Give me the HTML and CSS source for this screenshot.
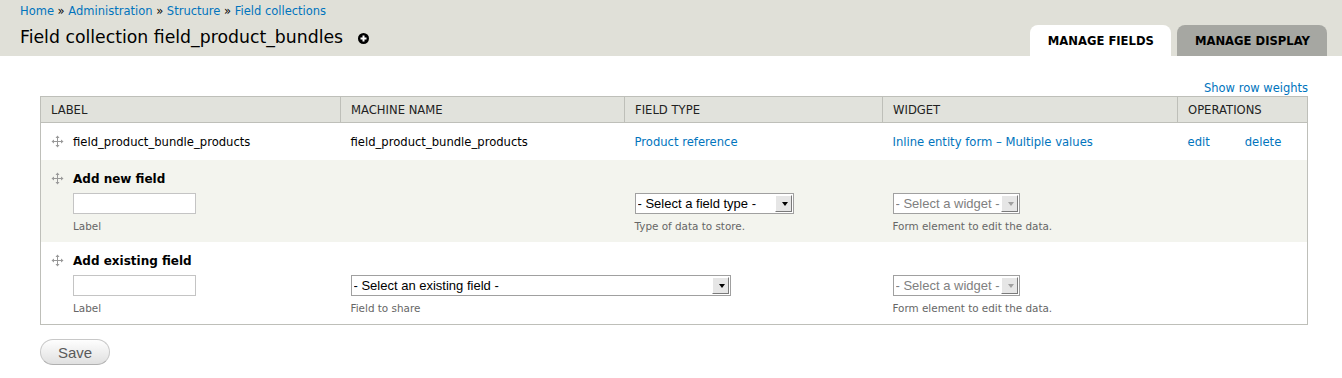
FILE: index.html
```html
<!DOCTYPE html>
<html lang="en">
<head>
    <meta charset="UTF-8">
    <title>Field collection field_product_bundles</title>
    <link rel="stylesheet" href="styles.css">
</head>
<body>
    <div class="branding">
        <div class="branding-main">
            <div class="breadcrumb">
                <a href="#">Home</a> » <a href="#">Administration</a> » <a href="#">Structure</a> » <a href="#">Field collections</a>
            </div>
            <h1 class="page-title">
                Field collection field_product_bundles
                <a href="#" class="shortcut" title="Add to shortcuts">
                    <svg width="11" height="11" viewBox="0 0 11 11"><circle cx="5.5" cy="5.5" r="5.5" fill="#000"/><path d="M4.5 2.5h2v2h2v2h-2v2h-2v-2h-2v-2h2z" fill="#fff"/></svg>
                </a>
            </h1>
        </div>
        <ul class="tabs">
            <li class="tab active"><a href="#">Manage fields</a></li>
            <li class="tab"><a href="#">Manage display</a></li>
        </ul>
    </div>

    <div class="page">
        <div class="row-weights"><a href="#">Show row weights</a></div>

        <form>
            <table class="field-overview">
                <colgroup>
                    <col style="width: 300px">
                    <col style="width: 284px">
                    <col style="width: 258px">
                    <col style="width: 295px">
                    <col>
                </colgroup>
                <thead>
                    <tr>
                        <th>Label</th>
                        <th>Machine name</th>
                        <th>Field type</th>
                        <th>Widget</th>
                        <th>Operations</th>
                    </tr>
                </thead>
                <tbody>
                    <tr class="field-row">
                        <td>
                            <span class="drag-handle"><svg width="13" height="13" viewBox="0 0 13 13"><path d="M6 3h1v3h3v1H7v3H6V7H3V6h3z" fill="#999"/><path d="M6.5 0.5L8.5 3h-4zM6.5 12.5L4.5 10h4zM0.5 6.5L3 4.5v4zM12.5 6.5L10 8.5v-4z" fill="#999"/></svg></span>field_product_bundle_products
                        </td>
                        <td>field_product_bundle_products</td>
                        <td><a href="#">Product reference</a></td>
                        <td><a href="#">Inline entity form – Multiple values</a></td>
                        <td class="ops"><a href="#">edit</a><a href="#">delete</a></td>
                    </tr>
                    <tr class="add-row even">
                        <td>
                            <div class="add-title">
                                <span class="drag-handle"><svg width="13" height="13" viewBox="0 0 13 13"><path d="M6 3h1v3h3v1H7v3H6V7H3V6h3z" fill="#999"/><path d="M6.5 0.5L8.5 3h-4zM6.5 12.5L4.5 10h4zM0.5 6.5L3 4.5v4zM12.5 6.5L10 8.5v-4z" fill="#999"/></svg></span>Add new field
                            </div>
                            <div class="add-body">
                                <input type="text" class="text-input">
                                <div class="description">Label</div>
                            </div>
                        </td>
                        <td></td>
                        <td>
                            <span class="select" style="width: 159px">
                                <select><option>- Select a field type -</option></select>
                            </span>
                            <div class="description">Type of data to store.</div>
                        </td>
                        <td>
                            <span class="select disabled" style="width: 127px">
                                <select disabled><option>- Select a widget -</option></select>
                            </span>
                            <div class="description">Form element to edit the data.</div>
                        </td>
                        <td></td>
                    </tr>
                    <tr class="add-row">
                        <td>
                            <div class="add-title">
                                <span class="drag-handle"><svg width="13" height="13" viewBox="0 0 13 13"><path d="M6 3h1v3h3v1H7v3H6V7H3V6h3z" fill="#999"/><path d="M6.5 0.5L8.5 3h-4zM6.5 12.5L4.5 10h4zM0.5 6.5L3 4.5v4zM12.5 6.5L10 8.5v-4z" fill="#999"/></svg></span>Add existing field
                            </div>
                            <div class="add-body">
                                <input type="text" class="text-input">
                                <div class="description">Label</div>
                            </div>
                        </td>
                        <td colspan="2">
                            <span class="select" style="width: 380px">
                                <select><option>- Select an existing field -</option></select>
                            </span>
                            <div class="description">Field to share</div>
                        </td>
                        <td>
                            <span class="select disabled" style="width: 127px">
                                <select disabled><option>- Select a widget -</option></select>
                            </span>
                            <div class="description">Form element to edit the data.</div>
                        </td>
                        <td></td>
                    </tr>
                </tbody>
            </table>

            <div class="form-actions">
                <button type="submit" class="button">Save</button>
            </div>
        </form>
    </div>
</body>
</html>
```

FILE: styles.css
```css
:root {
    --link: #0074bd;
    --header-bg: #e0e0d8;
    --border: #bebfb9;
    --th-bg: #e1e2dc;
    --even-bg: #f3f4ee;
    --desc: #666;
}

* {
    margin: 0;
    padding: 0;
    box-sizing: border-box;
}

body {
    font-family: "DejaVu Sans", Verdana, sans-serif;
    font-size: 11.6px;
    color: #000;
    background: #fff;
}

a {
    color: var(--link);
    text-decoration: none;
}

/* header */

.branding {
    background: var(--header-bg);
    height: 56px;
    padding: 0 15px 0 20px;
    display: flex;
    justify-content: space-between;
    align-items: flex-end;
}

.branding-main {
    align-self: flex-start;
    padding-top: 4px;
}

.breadcrumb {
    line-height: 14px;
    font-size: 11.5px;
}

.page-title {
    margin-top: 8px;
    font-size: 17.3px;
    font-weight: normal;
    line-height: 22px;
    display: flex;
    align-items: center;
}

.shortcut {
    display: inline-flex;
    margin-left: 15px;
    margin-top: 2px;
}

.tabs {
    list-style: none;
    display: flex;
    gap: 6px;
}

.tab a {
    display: block;
    height: 31px;
    line-height: 32px;
    padding: 0 17px 0 18px;
    border-radius: 8px 8px 0 0;
    background: #a6a7a2;
    color: #000;
    font-weight: bold;
    font-size: 11.6px;
    text-transform: uppercase;
}

.tab.active a {
    background: #fff;
}

/* content */

.page {
    padding: 25px 34px 20px 40px;
}

.row-weights {
    text-align: right;
    line-height: 14px;
    font-size: 11.5px;
    margin-bottom: 1px;
}

.field-overview {
    width: 100%;
    table-layout: fixed;
    border-collapse: collapse;
    border: 1px solid var(--border);
}

.field-overview th {
    background: var(--th-bg);
    border-right: 1px solid var(--border);
    border-bottom: 1px solid var(--border);
    padding: 5px 10px 3px;
    line-height: 17px;
    font-weight: normal;
    text-align: left;
    text-transform: uppercase;
    color: #222;
}

.field-overview td {
    padding: 11px 10px 9px;
    line-height: 17px;
    vertical-align: middle;
}

.field-row td {
    white-space: nowrap;
}

.drag-handle {
    display: inline-flex;
    width: 13px;
    height: 13px;
    margin-right: 9px;
    vertical-align: -2px;
}

.ops a {
    margin-right: 35px;
}

.add-row td {
    padding: 10px 10px 9px;
    vertical-align: bottom;
}

.add-row.even td {
    background: var(--even-bg);
}

.add-title {
    font-weight: bold;
    font-size: 12px;
    line-height: 18px;
    white-space: nowrap;
}

.add-body {
    margin-left: 22px;
    margin-top: 5px;
}

.text-input {
    display: block;
    width: 123px;
    height: 21px;
    border: 1px solid #c4c4c4;
    background: #fff;
}

.description {
    margin-top: 5px;
    font-size: 10.4px;
    line-height: 14px;
    color: var(--desc);
    white-space: nowrap;
}

/* windows-classic looking select */

.select {
    position: relative;
    display: block;
    height: 21px;
}

.select select {
    appearance: none;
    -webkit-appearance: none;
    width: 100%;
    height: 21px;
    border: 1px solid #a0a0a0;
    background: #fff;
    font-family: "Liberation Sans", Arial, sans-serif;
    font-size: 13px;
    color: #000;
    padding: 0 18px 0 2px;
}

.select.disabled select {
    color: #808080;
    opacity: 1;
}

.select::before {
    content: "";
    position: absolute;
    top: 2px;
    right: 2px;
    bottom: 2px;
    width: 15px;
    background: #e6e6e6;
    border: 1px solid;
    border-color: #fff #7a7a7a #7a7a7a #fff;
    pointer-events: none;
}

.select::after {
    content: "";
    position: absolute;
    top: 9px;
    right: 6px;
    border-left: 3.5px solid transparent;
    border-right: 3.5px solid transparent;
    border-top: 4px solid #000;
    pointer-events: none;
}

.select.disabled::after {
    border-top-color: #a0a0a0;
}

/* buttons */

.form-actions {
    margin-top: 14px;
}

.button {
    font-family: "Liberation Sans", Arial, sans-serif;
    font-size: 15px;
    line-height: 17px;
    color: #5a5a5a;
    padding: 4px 17px 3px;
    border: 1px solid #c8c8c8;
    border-bottom-color: #b0b0b0;
    border-radius: 20px;
    background: linear-gradient(#fefefe, #e0e0e0);
    cursor: pointer;
}
```
